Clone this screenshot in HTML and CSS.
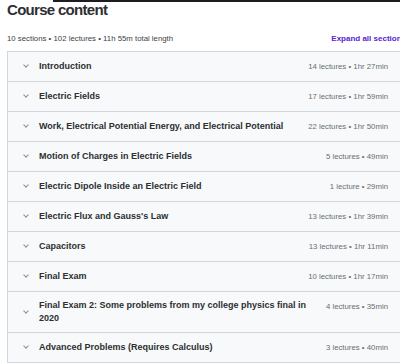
FILE: index.html
```html
<!DOCTYPE html>
<html lang="en">

<head>
  <meta charset="UTF-8">
  <meta name="viewport" content="width=device-width, initial-scale=1.0">
  <title>Course content</title>
  <link rel="stylesheet" href="styles.css">
</head>

<body>
  <div class="top-bar"></div>
  <div class="container">
    <h2>Course content</h2>

    <div class="summary">
      <span>10 sections • 102 lectures • 11h 55m total length</span>
      <button class="expand">Expand all sections</button>
    </div>

    <div class="sections">
      <div class="section">
        <span class="chevron"></span>
        <span class="title">Introduction</span>
        <span class="meta">14 lectures • 1hr 27min</span>
      </div>
      <div class="section">
        <span class="chevron"></span>
        <span class="title">Electric Fields</span>
        <span class="meta">17 lectures • 1hr 59min</span>
      </div>
      <div class="section">
        <span class="chevron"></span>
        <span class="title">Work, Electrical Potential Energy, and Electrical Potential</span>
        <span class="meta">22 lectures • 1hr 50min</span>
      </div>
      <div class="section">
        <span class="chevron"></span>
        <span class="title">Motion of Charges in Electric Fields</span>
        <span class="meta">5 lectures • 49min</span>
      </div>
      <div class="section">
        <span class="chevron"></span>
        <span class="title">Electric Dipole Inside an Electric Field</span>
        <span class="meta">1 lecture • 29min</span>
      </div>
      <div class="section">
        <span class="chevron"></span>
        <span class="title">Electric Flux and Gauss's Law</span>
        <span class="meta">13 lectures • 1hr 39min</span>
      </div>
      <div class="section">
        <span class="chevron"></span>
        <span class="title">Capacitors</span>
        <span class="meta">13 lectures • 1hr 11min</span>
      </div>
      <div class="section">
        <span class="chevron"></span>
        <span class="title">Final Exam</span>
        <span class="meta">10 lectures • 1hr 17min</span>
      </div>
      <div class="section">
        <span class="chevron"></span>
        <span class="title">Final Exam 2: Some problems from my college physics final in 2020</span>
        <span class="meta">4 lectures • 35min</span>
      </div>
      <div class="section">
        <span class="chevron"></span>
        <span class="title">Advanced Problems (Requires Calculus)</span>
        <span class="meta">3 lectures • 40min</span>
      </div>
    </div>
  </div>
</body>

</html>
```

FILE: styles.css
```css
* {
  box-sizing: border-box;
}

body {
  font-family: "Liberation Sans", Arial, sans-serif;
  background-color: #fff;
  color: #2d2f31;
  margin: 0;
  overflow: hidden;
}

.top-bar {
  height: 2px;
  margin-left: 53px;
  background: #1c1d1f;
}

.container {
  width: 406px;
  padding-left: 7px;
}

h2 {
  margin: 0;
  font-size: 15px;
  line-height: 16px;
  font-weight: bold;
  letter-spacing: -0.7px;
}

.summary {
  display: flex;
  align-items: center;
  justify-content: space-between;
  margin-top: 15px;
  height: 11px;
  font-size: 7.8px;
  color: #3e4143;
}

.expand {
  background: none;
  border: none;
  padding: 0;
  font-family: inherit;
  font-size: 8px;
  font-weight: bold;
  color: #5624d0;
  white-space: nowrap;
  cursor: pointer;
}

.sections {
  margin-top: 7px;
  border: 1px solid #d1d7dc;
  border-bottom: none;
}

.section {
  display: flex;
  align-items: center;
  min-height: 30px;
  padding: 7px 17px 7px 16px;
  background: #f7f9fa;
  border-bottom: 1px solid #d1d7dc;
  font-size: 9px;
  line-height: 13px;
}

.chevron {
  width: 4px;
  height: 4px;
  margin: -3px 11px 0 0;
  border-right: 1px solid #8b9094;
  border-bottom: 1px solid #8b9094;
  transform: rotate(45deg);
  flex-shrink: 0;
}

.title {
  flex: 1;
  font-weight: bold;
  padding-right: 18px;
}

.meta {
  color: #6a6f73;
  font-size: 7.8px;
  white-space: nowrap;
  align-self: flex-start;
  margin-top: 1px;
}
```
